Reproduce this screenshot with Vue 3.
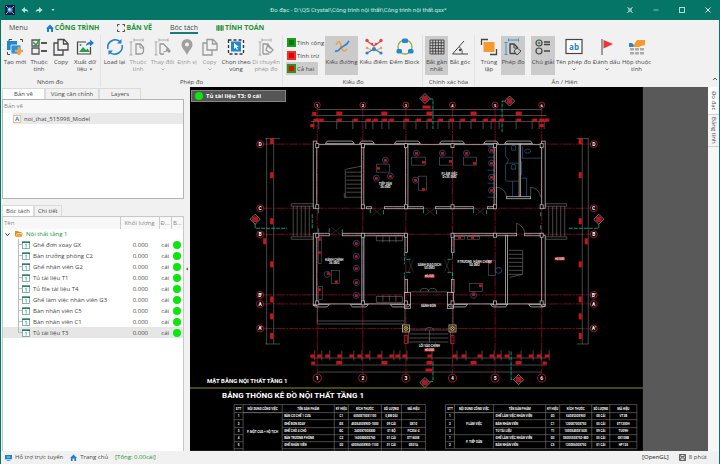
<script setup>
import { ref } from 'vue'

const icons = {
  create: '<path d="M3 4V1.500h3M14 1.500h2.500V4M1.500 14v2.500H4" fill="none" stroke="#444"/><rect x="1" y="3" width="10" height="9" fill="#1e88d2"/><path d="M5 7h10v9H5z" fill="#2d93da" stroke="#f1f1f1" stroke-width=".8"/><path d="M13 9v8M9 13h8" stroke="#f1a14a" stroke-width="2.600"/>',
  props: '<path d="M2 2h7v6H2zM2 10h7v6H2z" fill="none" stroke="#555" stroke-width="1.300"/><path d="M3 4l3 3 4-6" fill="none" stroke="#2b9c4a" stroke-width="1.500"/><path d="M11 5h6M11 13h6" stroke="#555" stroke-width="1.800"/>',
  copy: '<path d="M6 1.500h6l4 4V12H6zM11.500 1.500V6H16" fill="none" stroke="currentColor" stroke-width="1.300"/><path d="M6 5H2v12h9v-5" fill="none" stroke="currentColor" stroke-width="1.300"/>',
  export: '<path d="M10 4H1.500v12h13V9" fill="none" stroke="#444" stroke-width="1.200"/><path d="M3 14l4-5 3 3 1.500-1.500L14 14z" fill="#2b9c4a"/><circle cx="4.500" cy="7" r="1" fill="#2b9c4a"/><path d="M10 8c0-3 2-4 4-4V1.500L18 5l-4 3.500V6.500c-2 0-3 .5-4 1.500z" fill="#1e7fd0"/>',
  reload: '<path d="M2 11A7.500 7.500 0 0 1 14 3.500M16 7A7.500 7.500 0 0 1 4 14.500" fill="none" stroke="#1e7fd6" stroke-width="1.500"/><path d="M15.500 1v4.500H11zM2.500 17v-4.500H7z" fill="#1e7fd6"/>',
  measure: '<path d="M2 4v13M.5 4h3M.5 17h3M5 2h9M5 .5v3M14 .5v3" fill="none" stroke="#aaa"/><path d="M7 16V6h4.500l3 3.500V13c0 2-2 3-4 3z" fill="none" stroke="#999" stroke-width="1.300"/><path d="M11 6v4h3" fill="none" stroke="#999"/>',
  change: '<path d="M2 4v13M.5 4h3M.5 17h3M5 2h9M5 .5v3M14 .5v3" fill="none" stroke="#aaa"/><path d="M6 16V6h3.500l5 5-2 2-3 1M6 16h4" fill="none" stroke="#999" stroke-width="1.300"/><path d="M13 9l4 4-2 2-3-3z" fill="#999"/>',
  pin: '<path d="M9 1a5.500 5.500 0 0 0-5.500 5.500C3.500 10 7 12.500 9 17c2-4.500 5.500-7 5.500-10.500A5.500 5.500 0 0 0 9 1z" fill="#a0a0a0"/><circle cx="9" cy="6.500" r="2" fill="#f1f1f1"/>',
  region: '<rect x="1.500" y="2" width="15" height="14" fill="none" stroke="#333" stroke-width="1.300" stroke-dasharray="3 2"/><rect x="4" y="3.500" width="10" height="10" fill="#1e88d2"/><path d="M7 5v6l1.500-1.500L10 12l1-1-1.500-2H12z" fill="#fff"/>',
  move: '<path d="M3 4v13M1.500 4h3M1.500 17h3M5 2h9M5 .5v3M14 .5v3" fill="none" stroke="#aaa"/><path d="M6 16V6h3.500l4 4.500M6 16h6" fill="none" stroke="#999" stroke-width="1.300"/><path d="M11 6l2 3 3 3-3 3-4-3z" fill="none" stroke="#999" stroke-width="1.300"/>',
  line: '<path d="M3 7c3-6 4-3 5 1s3 7 6 3" fill="none" stroke="#f1a14a" stroke-width="1.600"/><path d="M2 13c4 1 4-2 7-4s4-1 7-6" fill="none" stroke="#2c86c8" stroke-width="1.600"/>',
  points: '<path d="M2 3l7 5 7-5" fill="none" stroke="#e04848" stroke-width="1.200"/><path d="M2 10l7 3 7-3" fill="none" stroke="#f1a14a"/><path d="M2 15l7-4 7 4" fill="none" stroke="#2c86c8" stroke-width="1.200"/><g fill="#e04848"><circle cx="2" cy="2.500" r="1.700"/><circle cx="16" cy="2.500" r="1.700"/><circle cx="7" cy="6" r="1.300"/><circle cx="11" cy="6" r="1.300"/></g><circle cx="2" cy="10" r="1.300" fill="#f1a14a"/><circle cx="16" cy="10" r="1.300" fill="#f1a14a"/><g fill="#2c86c8"><circle cx="2" cy="15" r="1.600"/><circle cx="16" cy="15" r="1.600"/><circle cx="9" cy="11" r="2"/></g>',
  block: '<circle cx="9" cy="9" r="7" fill="none" stroke="#a3ad3b" stroke-width="1.400"/><g fill="#1e88d2"><rect x="6" y="0.500" width="6" height="4.500" rx="1.500"/><rect x="0.500" y="11" width="5.500" height="4.500" rx="1.500"/><rect x="12" y="11" width="5.500" height="4.500" rx="1.500"/></g>',
  grid: '<path d="M2 2h14v14H2zM4.800 2v14M7.600 2v14M10.400 2v14M13.200 2v14M2 4.800h14M2 7.600h14M2 10.400h14M2 13.200h14" fill="none" stroke="#333" stroke-width=".8"/>',
  angle: '<path d="M13 3L1.500 16H17" fill="none" stroke="#444"/><path d="M8 8.500c3 2 3.500 5 3 7.500" fill="none" stroke="#444" stroke-width=".9"/><circle cx="9" cy="12" r="1.200" fill="#444"/>',
  overlap: '<path d="M1.500 7V1.500H8M16.500 11v5.500H10" fill="none" stroke="#444" stroke-width="1.300"/><rect x="3.500" y="4" width="11" height="10" fill="#f79a2e"/>',
  gauge: '<path d="M2 4v13M.5 4.500h3M.5 16.500h3M4 2h11M4.500 .5v3M14.500 .5v3" fill="none" stroke="#3c92cc"/><path d="M6 15.500V6h4l4 4M6 15.500h6" fill="none" stroke="#444" stroke-width="1.400"/><path d="M10 6v4h3M10 13l3-3 4 3-4 4z" fill="none" stroke="#444"/>',
  legend: '<circle cx="5" cy="5" r="3" fill="none" stroke="#444" stroke-width="1.200"/><circle cx="5" cy="5" r="1.300" fill="#3b9c57"/><circle cx="5" cy="13" r="3" fill="none" stroke="#444" stroke-width="1.200"/><path d="M10 4h6M10 6.500h6M10 13h6" stroke="#444" stroke-width="1.300"/>',
  ab: '<rect x="1" y="1.500" width="16" height="14" fill="#fff" stroke="#444" stroke-width="1.200"/><text x="9" y="11.500" text-anchor="middle" font-size="8" font-weight="700" fill="#1e7fd0">ab</text>',
  flag: '<path d="M4 1v16" stroke="#555" stroke-width="1.100"/><path d="M5.500 2L15 6l-9.500 4.500z" fill="#ee3135"/>',
  panel: '<path d="M1 5h3l3 3-1 1H1z" fill="#2c86c8"/><path d="M9 2h8v5l-4 1-2 1H5l2-4z" fill="#f79a2e"/><g fill="#aaa"><rect x="2" y="10" width="4" height="2.500"/><rect x="7" y="10" width="4" height="2.500"/><rect x="12" y="10" width="4" height="2.500"/><rect x="2" y="14" width="4" height="2.500"/><rect x="7" y="14" width="4" height="2.500"/><rect x="12" y="14" width="4" height="2.500"/></g>',
}

const groups = [
  { key: 'manage', label: 'Nhóm đo', items: [
    { icon: 'create', lines: ['Tạo mới'] },
    { icon: 'props', lines: ['Thuộc', 'tính'] },
    { icon: 'copy', lines: ['Copy'] },
    { icon: 'export', lines: ['Xuất dữ', 'liệu'], inlineDrop: true },
  ] },
  { key: 'measure', label: 'Phép đo', items: [
    { icon: 'reload', lines: ['Load lại'] },
    { icon: 'measure', lines: ['Thuộc', 'tính'], dim: true },
    { icon: 'change', lines: ['Thay đổi'], dim: true, drop: true },
    { icon: 'pin', lines: ['Định vị'], dim: true },
    { icon: 'copy', lines: ['Copy'], dim: true, drop: true },
    { icon: 'region', lines: ['Chọn theo', 'vùng'] },
    { icon: 'move', lines: ['Di chuyển', 'phép đo'], dim: true },
  ] },
  { key: 'kind', label: 'Kiểu đo', signs: true, items: [
    { icon: 'line', lines: ['Kiểu đường'], on: true },
    { icon: 'points', lines: ['Kiểu điểm'] },
    { icon: 'block', lines: ['Đếm Block'] },
  ] },
  { key: 'snap', label: 'Chính xác hóa', items: [
    { icon: 'grid', lines: ['Bắt gần', 'nhất'], on: true },
    { icon: 'angle', lines: ['Bắt góc'] },
  ] },
  { key: 'show', label: 'Ẩn / Hiện', items: [
    { icon: 'overlap', lines: ['Trùng', 'lặp'] },
    { icon: 'gauge', lines: ['Phép đo'], on: true },
    { icon: 'legend', lines: ['Chú giải'], on: true },
    { icon: 'ab', lines: ['Tên phép đo'], drop: true },
    { icon: 'flag', lines: ['Đánh dấu'], drop: true },
    { icon: 'panel', lines: ['Hộp thuộc', 'tính'] },
  ] },
]
const signs = [
  { cls: 'plus', label: 'Tính cộng' },
  { cls: 'minus', label: 'Tính trừ' },
  { cls: 'both', label: 'Cả hai' },
]
const activeSign = ref('both')

const items = ['Ghế đơn xoay GX', 'Bàn trưởng phòng C2', 'Ghế nhân viên G2', 'Tủ tài liệu T1', 'Tủ file tài liệu T4', 'Ghế làm việc nhân viên G3', 'Bàn nhân viên C5', 'Bàn nhân viên C1', 'Tủ tài liệu T3']
const selected = ref('Tủ tài liệu T3')

/* Plan geometry, in drawing units */
const cols = [317, 362.5, 405.5, 452, 494.5, 541]
const rows = [['D', 144], ['C', 208], ['B', 234], ["B'", 294.5], ['A', 303.5], ["A'", 328]]
const walls = [
  [313, 141, 3.5, 67], [541, 141, 3.5, 67], [361, 144, 2.5, 63], [405, 144, 2.5, 63], [493.5, 144, 2.5, 63], [518.5, 144, 1.5, 52],
  [366, 206.5, 5, 2], [384, 206.5, 39, 2], [435, 206.5, 38, 2], [487, 206.5, 8, 2], [506, 196.5, 24, 2],
  [317, 233, 12, 2.5], [342, 233, 64, 2.5], [452, 233, 64, 2.5], [524, 233, 18, 2.5],
  [313, 233, 3.5, 72], [361.5, 235, 2, 69], [404.5, 235, 2.5, 17], [404.5, 279, 2.5, 13], [451, 235, 2.5, 17], [451, 279, 2.5, 13],
  [505, 235, 2, 69], [541, 235, 3.5, 71], [404, 292, 6, 16], [447, 292, 6, 16],
]
const bays = [[325, 29], [359, 15], [394, 26], [439, 25], [483, 15], [504, 28]]
const lowBays = [[313, 16], [350, 18], [390, 20], [447, 20], [490, 17], [528, 17]]
const pillars = []
for (const x of cols) for (const y of [145, 206, 234.5, 302]) pillars.push([x - 1.5, y - 1.5])
const doors = [[370, 209], [423, 209], [473, 209], [329, 228]]
const topMarks = [316, 321, 339, 355, 368, 375, 384, 391, 406, 418, 429, 440, 451, 462, 473, 485, 493, 501, 518, 534, 541, 546]
const lowMarks = [312, 319, 327, 339, 351, 359, 367, 379, 391, 397, 404, 429, 454, 463, 479, 491, 498, 506, 518, 530, 538, 546]
const spans = [339, 384, 429, 473, 518]
const sideMarks = [141, 175, 221, 264, 299, 316, 335.5]
const desks = [
  [376, 164, 13, 8], [411, 157, 14, 8], [439, 157, 13, 8], [463, 157, 13, 8], [418, 176, 8, 14],
  [331, 270, 8, 13], [488, 260, 7, 15], [469, 283, 13, 8], [454, 236, 10, 3], [467, 236, 12, 3],
  [318, 237, 3, 26], [318, 286, 4, 13],
]
const chairs = [
  [385, 160], [376, 178], [390, 176], [416, 153], [442, 153], [466, 153], [415, 180], [327, 274], [498, 270], [473, 295],
  [356, 243], [356, 256], [356, 268], [356, 282], [356, 295], [491, 150], [491, 163], [491, 177], [491, 190],
]
const tags = [
  [385, 160], [378, 168], [376, 178], [390, 176], [416, 153], [423, 162], [442, 153], [450, 161], [466, 153], [474, 163], [415, 180], [423, 189],
  [328, 273], [336, 281], [489, 262], [480, 285], [473, 294], [356, 243], [356, 256], [356, 268], [356, 282], [356, 295],
  [491, 150], [491, 163], [491, 177], [491, 190], [319, 239], [319, 252], [319, 289], [459, 237], [472, 237],
]
const rooms = [
  [385, 185, 'TIẾP DÂN'], [385, 188, '36.0M2'], [449, 175, 'P.LÀM VIỆC'], [449, 178, 'D=35.0M2'], [334, 261, 'HÀNH CHÍNH'], [334, 264, '36.0M2'],
  [429, 266, 'SẢNH GIAO DỊCH'], [429, 269, '50.0M2'], [428, 307, 'SẢNH ĐÓN'], [474, 263, 'P.TRƯỞNG, HÀNH CHÍNH'], [474, 266, '54.0M2'], [429, 346.5, 'LỐI VÀO CHÍNH'],
]
const levels = [[429, 277], [429, 350.5], [559, 259.5]]
const sections = [[255, 219], [424.5, 98.5], [509, 101], [598, 219], [424.5, 382], [518, 379]]

const heads = ['STT', 'NỘI DUNG CÔNG VIỆC', 'TÊN SẢN PHẨM', 'KÝ HIỆU', 'KÍCH THƯỚC', 'SỐ LƯỢNG', 'MÃ HIỆU']
const ys = [404, 412, 419, 427, 434, 441, 448]
const schedules = [
  { xs: [234, 243, 282, 334, 348, 381, 401, 425], bodyEnd: 450, merges: [[412, 450, 'P. MỘT CỬA + HỘ TỊCH']], rows: [
    ['1', 'BÀN CƠ CHẾ 1 CỬA', 'C1', '6000X700X1100', '5,8M DÀI', ''],
    ['2', 'GHẾ ĐƠN XOAY', 'GX', '450X450X900-1000', '09 CÁI', 'GX10'],
    ['3', 'GHẾ CHỜ 4 CHỖ', 'GC', '2400X700X800', '01 BỘ', 'PC204-4'],
    ['4', 'BÀN TRƯỞNG PHÒNG', 'C2', '1600X800X760', '01 CÁI', 'ET1600E'],
    ['5', 'GHẾ NHÂN VIÊN', 'G2', '600X600X900-1100', '01 CÁI', 'GX01A'],
  ] },
  { xs: [445, 454, 493, 545, 559, 591, 609, 636], bodyEnd: 448, merges: [[412, 434, 'P.LÀM VIỆC'], [434, 448, 'P. TIẾP DÂN']], rows: [
    ['1', 'GHẾ LÀM VIỆC NHÂN VIÊN', 'G3', '540X530X900', '08 CÁI', 'VT3B'],
    ['2', 'BÀN NHÂN VIÊN', 'C1', '1200X700X750', '05 CÁI', 'ET1200H'],
    ['3', 'TỦ TÀI LIỆU', 'T1', '1000X450X1830', '09 CÁI', 'TU09H'],
    ['1', 'GHẾ LÀM VIỆC NHÂN VIÊN', 'G3', '550X550X750-880', '05 CÁI', 'GX108B'],
    ['2', 'BÀN NHÂN VIÊN', 'C5', '1200X600X750', '01 CÁI', 'HP12S'],
  ] },
]
const mid = (a, i) => (a[i] + a[i + 1]) / 2
</script>

<template>
  <div class="app">
    <header class="titlebar">
      <div class="quick">
        <svg class="logo" viewBox="0 0 10 10"><rect width="10" height="10" fill="#10163c" /><path d="M1 1l2 2M9 1L7 3M1 9l2-2M9 9L7 7" stroke="#bcd" stroke-width=".8" /><circle cx="5" cy="5" r="2.700" fill="#3f8fe0" /><circle cx="4.500" cy="4.500" r="1.200" fill="#d8f0ff" /></svg>
        <button aria-label="Undo"><svg viewBox="0 0 8 8"><path d="M4 1v2c2 0 3 1 3.500 3.500C6.500 5 5.500 5 4 5v2L.5 4z" fill="#b9e2dc" /></svg></button>
        <button aria-label="Redo"><svg viewBox="0 0 8 8"><path d="M4 1v2c-2 0-3 1-3.500 3.500C1.500 5 2.500 5 4 5v2l3.500-3z" fill="#b9e2dc" /></svg></button>
        <button aria-label="Customize"><svg viewBox="0 0 8 8"><path d="M2.500 3h3L4 5z" fill="#cfeae6" /></svg></button>
      </div>
      <h1>Đo đạc - D:\QS Crystal\Công trình nội thất\Công trình nội thất.qsx*</h1>
      <div class="winbtns">
        <button aria-label="Fit"><svg viewBox="0 0 8 8"><path d="M1.500 1l1.500 2h2l1.500-2M1.500 7L3 5h2l1.500 2M3 3v2M5 3v2" fill="none" stroke="#cfeae6" stroke-width=".9" /></svg></button>
        <button aria-label="Minimize"><svg viewBox="0 0 8 8"><path d="M1.500 4h5" stroke="#8cc8bf" /></svg></button>
        <button aria-label="Maximize"><svg viewBox="0 0 8 8"><rect x="1.500" y="1.500" width="5" height="5" fill="none" stroke="#b5ddd7" /></svg></button>
        <button aria-label="Close"><svg viewBox="0 0 8 8"><path d="M1.500 1.500l5 5M6.500 1.500l-5 5" stroke="#e3f4f1" /></svg></button>
      </div>
    </header>

    <section class="ribbon">
      <nav class="menu">
        <button class="plain">Menu</button>
        <button><svg viewBox="0 0 8 8"><path d="M4 .5L0 4.500h1V8h2V5h2v3h2V4.500h1z" fill="#1e7fd0" /></svg>CÔNG TRÌNH</button>
        <button><svg viewBox="0 0 8 8"><path d="M.5 2.500v-2h2M5.500.5h2v2M7.500 5.500v2h-2M2.500 7.500h-2v-2" fill="none" stroke="#444" /></svg>BẢN VẼ</button>
        <button class="plain current">Bóc tách</button>
        <button><svg viewBox="0 0 8 8"><path d="M0 1h8v6H0z" fill="#9dc59f" /><path d="M0 3h8M0 5h8M2.500 1v6M5.500 1v6" stroke="#2e8b3e" stroke-width=".7" /></svg>TÍNH TOÁN</button>
      </nav>
      <div class="groups">
        <div v-for="g in groups" :key="g.key" class="group" :class="g.key">
          <div class="tools">
            <div v-if="g.signs" class="signs">
              <button v-for="s in signs" :key="s.cls" :class="{ on: activeSign === s.cls }" @click="activeSign = s.cls">
                <i :class="s.cls"></i>{{ s.label }}
              </button>
            </div>
            <button v-for="(t, i) in g.items" :key="i" class="tool" :class="{ on: t.on, dim: t.dim }">
              <svg viewBox="0 0 18 18" v-html="icons[t.icon]"></svg>
              <span v-for="l in t.lines" :key="l">{{ l }}<svg v-if="t.inlineDrop && l === t.lines[1]" class="caret" viewBox="0 0 4 3"><path d="M.5.5h3L2 2.500z" fill="#666" /></svg></span>
              <svg v-if="t.drop" class="caret below" viewBox="0 0 4 3"><path d="M.5.5L2 2 3.500.5" fill="none" stroke="currentColor" stroke-width=".7" /></svg>
            </button>
          </div>
          <p>{{ g.label }}</p>
        </div>
        <button class="collapse" aria-label="Collapse"><svg viewBox="0 0 6 6"><path d="M1 4l2-2 2 2" fill="none" stroke="#555" /></svg></button>
      </div>
    </section>

    <main class="main">
      <aside class="side">
        <div class="tabs top"><button class="active">Bản vẽ</button><button>Vùng căn chỉnh</button><button>Layers</button></div>
        <div class="drawings">
          <div class="dhead">Bản vẽ</div>
          <div class="drow"><b>A</b>noi_that_515998_Model</div>
        </div>
        <div class="tabs low"><button class="active">Bóc tách</button><button>Chi tiết</button></div>
        <div class="treebox">
          <table>
            <thead><tr><th class="c-name">Tên</th><th class="c-qty">Khối lượng</th><th class="c-unit">Đ...</th><th class="c-dot">B...</th></tr></thead>
            <tbody>
              <tr class="parent">
                <td colspan="4"><div><svg class="chev" viewBox="0 0 6 6"><path d="M.5 1.500L3 4.500l2.500-3" fill="none" stroke="#444" stroke-width="1.200" /></svg><svg class="folder" viewBox="0 0 8 6"><path d="M0 0h3l1 1h2.500v1H2L.5 5.500H0z" fill="#e8871e" /><path d="M2 2.500h6L6.500 6H.7z" fill="#f7a23a" /></svg>Nội thất tầng 1</div></td>
              </tr>
              <tr v-for="n in items" :key="n" class="leaf" :class="{ sel: n === selected }" @click="selected = n">
                <td><div><i class="branch"></i><svg class="one" viewBox="0 0 8 8"><rect x=".5" y="1" width="7" height="6.500" fill="#fff" stroke="#6f9a90" stroke-width=".8" /><path d="M0 1.200h8" stroke="#187a4a" stroke-width="1.400" /><path d="M3.400 3.600L4.200 3v3.600" fill="none" stroke="#2c9bd0" stroke-width=".8" /></svg>{{ n }}</div></td>
                <td class="num">0.000</td><td class="unit">cái</td><td class="dot"><i></i></td>
              </tr>
            </tbody>
          </table>
        </div>
      </aside>
      <div class="splitter"><svg viewBox="0 0 4 4"><path d="M3 .5v3L1 2z" fill="#555" /></svg></div>

      <div class="canvas">
        <svg class="plan" viewBox="190 87 517 363" role="img" aria-label="Mặt bằng nội thất tầng 1">
          <rect x="190" y="87" width="452" height="363" fill="#000" />
          <g class="axis">
            <path v-for="x in cols" :key="x" :d="`M${x} 108V373`" />
            <path v-for="r in rows" :key="r[0]" :d="`M263 ${r[1]}H590`" />
          </g>
          <g class="thin">
            <path d="M266.500 138V343.500M273.500 138V343.500M265 138.500H280M265 343.500H280M581.500 138V343.500M587.500 138V343.500M576 138.500H588M576 343.500H588" />
            <path d="M317 109.500H541M311 115.500H546M311 121.500H546M311 357.500H546M311 364.500H546M317 371.500H541M317 320.500H404M317 323.500H404M317 306V323" />
            <path v-for="x in topMarks" :key="'t' + x" :d="`M${x - 2.5} 119V129`" />
            <path v-for="x in lowMarks" :key="'l' + x" :d="`M${x + 2.5} 350V360`" />
            <path d="M409 329.500H448M409 333.500H448M409 337.500H448M409 341.500H448M408 331V343M450 331V343M429 330V342M425 330a4 3 0 0 1 8 0M410 291.500H448M420 291a4 3 0 0 1 8 0a4 3 0 0 1 8 0M404.500 308V324M452.500 308V324" />
            <path d="M291 203.500H313V206H291zM291 236.500H313V239H291zM293 206V236M297 206V236M301 206V236M305 206V236M309 206V236M545 203.500H566V206H545zM545 236.500H566V239H545zM548 206V236M552 206V236M556 206V236M560 206V236M564 206V236" />
            <path d="M346 169L361 166M345 169V198M344 193V197H361M346 172H361M346 176H361M346 180H361M346 184H361M346 188H361M346 192H361M508 250H522V274L509 277M508 254H522M508 258H522M508 262H522M508 266H522M508 270H522M508 274H522" />
            <path d="M376 240.500h26v-5h-26zM382.500 236v6M389 236v6M395.500 236v6M376 296h26v6h-26zM382.500 295v6M389 295v6M395.500 295v6M516 233V223c5 2 8 6 8 10M530 196V187c6 1 9 4 10 10M496 197V187c6 1 9 4 10 10" />
          </g>
          <g class="furn">
            <rect v-for="(d, i) in desks" :key="i" :x="d[0]" :y="d[1]" :width="d[2]" :height="d[3]" />
          </g>
          <g class="blue">
            <circle v-for="(c, i) in chairs" :key="i" :cx="c[0]" :cy="c[1]" r="3" />
            <path d="M505 146V156L508 160L505 165V180M505 163H518M505 181H518M521 158H532L540 158M522 146V158M521 161V175M511 147a2 2 0 0 1 4 0v3h-4zM511 166a2 2 0 0 1 4 0v3h-4zM524 151a3 2 0 1 0 6 0a3 2 0 1 0-6 0M521 178H526V196M512 181V196M487 146H494M487 157H494M487 170H494M487 183H494M487 197H494M363.500 236V303" />
          </g>
          <g class="walls">
            <rect v-for="(w, i) in walls" :key="i" :x="w[0]" :y="w[1]" :width="w[2]" :height="w[3]" />
            <path d="M316.500 144.500H541M316.500 303.500H404M453 303.500H541" />
            <path v-for="b in bays" :key="'b' + b[0]" :d="`M${b[0]} 143.500l2-2.500h${b[1] - 4}l2 2.500z`" />
            <path v-for="b in lowBays" :key="'w' + b[0]" :d="`M${b[0]} 304l2 2.500h${b[1] - 4}l2-2.500z`" />
            <rect v-for="(p, i) in pillars" :key="'p' + i" class="pillar" :x="p[0]" :y="p[1]" width="3" height="4" />
          </g>
          <g class="green">
            <path v-for="(d, i) in doors" :key="i" :d="`M${d[0]} ${d[1]}v5m13 0v-5`" />
            <path d="M404 252v12M410 259h-4M410 272h-4M404 279v-7M447 259h4M447 272h4M452 252v6M452 272v6M255 224v4h32M598 224v4h-30M429 99h3.500v30M504 101h-2.500v31M432.500 361v20h-3M510.500 351v28h3M312 214v14M318 209v5M318 228v4M540 212v4M540 225v5" />
          </g>
          <g class="x-doors"><path v-for="(d, i) in doors" :key="i" :d="`M${d[0] + 2} ${d[1] - 1}l9 7m0-7l-9 7`" /><path d="M408 259l5 13m0-13l-5 13M444 259l5 13m0-13l-5 13" /></g>
          <g class="marks">
            <rect v-for="x in topMarks" :key="'a' + x" :x="x - 2" y="118.500" width="4.500" height="3" />
            <rect v-for="x in lowMarks" :key="'c' + x" :x="x - 2" y="354" width="4.500" height="3" />
            <g v-for="x in spans" :key="'s' + x"><rect :x="x - 3" y="111.500" width="6" height="3.500" /><rect :x="x - 3" y="360.500" width="6" height="3.500" /></g>
            <rect x="422" y="105.500" width="8" height="3" /><rect x="425" y="368" width="7" height="3" />
            <rect x="312" y="112" width="4" height="3" /><rect x="310" y="124" width="4" height="3" /><rect x="539" y="124" width="4" height="3" /><rect x="311" y="361" width="4" height="3" /><rect x="542" y="361" width="4" height="3" />
            <g v-for="y in sideMarks" :key="'y' + y"><rect x="270" :y="y - 3" width="3" height="6" /><rect x="578" :y="y - 3" width="3" height="6" /></g>
            <rect x="263" y="238" width="3" height="6" /><rect x="584" y="238" width="3" height="6" />
            <rect v-for="(t, i) in tags" :key="'g' + i" :x="t[0] - 1.5" :y="t[1] - 1" width="3" height="2.500" />
            <path d="M404 335h3v8h-3zM450.500 335h3v8h-3z" stroke="#a01822" />
          </g>
          <g class="posts">
            <g v-for="x in [405.5, 452]" :key="x"><rect :x="x - 3.5" y="324.500" width="7" height="7" /><path :d="`M${x - 2} 326l4 4m0-4l-4 4`" /><circle :cx="x" cy="328" r="2" /></g>
          </g>
          <g class="bubbles">
            <g v-for="(x, i) in cols" :key="x"><circle :cx="x" cy="105" r="3" /><text :x="x" y="106.500">{{ i + 1 }}</text><circle :cx="x" cy="377.500" r="4" /><text class="big" :x="x" y="379.500">{{ i + 1 }}</text></g>
            <g v-for="r in rows" :key="r[0]"><circle cx="260" :cy="r[1]" r="3.500" /><text class="big" x="260" :y="r[1] + 2">{{ r[0] }}</text><circle cx="593" :cy="r[1]" r="3.500" /><text class="big" x="593" :y="r[1] + 2">{{ r[0] }}</text></g>
          </g>
          <g class="sections"><g v-for="(s, i) in sections" :key="i"><path :d="`M${s[0]} ${s[1] - 5}l5 5l-5 5l-5-5z`" /><circle :cx="s[0]" :cy="s[1]" r="3" /></g></g>
          <g class="rooms"><text v-for="(r, i) in rooms" :key="i" :x="r[0]" :y="r[1]">{{ r[2] }}</text></g>
          <g class="levels"><g v-for="(l, i) in levels" :key="i"><rect :x="l[0] - 5" :y="l[1] - 2.5" width="10" height="3" /><text :x="l[0]" :y="l[1]">±0.000</text></g></g>
          <path d="M190 387.500H642" stroke="#8f8f12" />
          <text class="cap" x="207" y="382">MẶT BẰNG NỘI THẤT TẦNG 1</text>
          <text class="cap large" x="222" y="397">BẢNG THỐNG KÊ ĐỒ NỘI THẤT TẦNG 1</text>
          <g v-for="(s, k) in schedules" :key="k" class="schedule">
            <path v-for="x in s.xs" :key="x" :d="`M${x} 404V${s.bodyEnd}`" />
            <path :d="`M${s.xs[0]} 404H${s.xs[7]}M${s.xs[0]} 412H${s.xs[7]}`" />
            <path v-for="y in ys.slice(2)" :key="y" :d="`M${s.xs[0]} ${y}H${s.xs[1]}M${s.xs[2]} ${y}H${s.xs[7]}`" />
            <text v-for="(h, i) in heads" :key="h" :x="mid(s.xs, i)" y="409">{{ h }}</text>
            <template v-for="(m, i) in s.merges" :key="i">
              <path :d="`M${s.xs[1]} ${m[0]}H${s.xs[2]}`" /><text :x="mid(s.xs, 1)" :y="(m[0] + m[1]) / 2 + 1">{{ m[2] }}</text>
            </template>
            <path v-if="s.bodyEnd === 448" :d="`M${s.xs[1]} 448H${s.xs[2]}`" />
            <template v-for="(r, i) in s.rows" :key="i">
              <text :x="mid(s.xs, 0)" :y="mid(ys, i + 1) + 1">{{ r[0] }}</text>
              <text class="left" :x="s.xs[2] + 2" :y="mid(ys, i + 1) + 1">{{ r[1] }}</text>
              <text v-for="j in 4" :key="j" :x="mid(s.xs, j + 2)" :y="mid(ys, i + 1) + 1">{{ r[j + 1] }}</text>
            </template>
          </g>
        </svg>
        <div class="badge"><i></i>Tủ tài liệu T3: 0 cái</div>
      </div>

      <nav class="dock"><button class="active">Đo đạc</button><button>Bảng tính</button></nav>
    </main>

    <footer class="status">
      <a href="#"><svg viewBox="0 0 8 8"><path d="M0 1h8v5H0zM2 7h4v1H2z" fill="#1e7fd0" /><path d="M2 3h4v1H2z" fill="#bfe0f5" /></svg>Hỗ trợ trực tuyến</a>
      <a href="#"><svg viewBox="0 0 8 8"><path d="M4 .5L0 4.500h1V8h2V5h2v3h2V4.500h1z" fill="#1e7fd0" /></svg>Trang chủ</a>
      <span class="total">[Tổng: 0.00cái]</span>
      <span class="gl">[OpenGL]</span>
      <span class="saved"><svg viewBox="0 0 8 8"><path d="M.5.5h7v7h-7zM2 .5v2.500h4V.5M2 7.500v-3h4v3" fill="none" stroke="#444" /></svg>8 phút</span>
    </footer>
  </div>
</template>

<style>
body { background: #f1f1f1; }
</style>

<style scoped>
* { box-sizing: border-box; margin: 0; padding: 0; }
.app { display: flex; flex-direction: column; min-height: 100vh; font: 6px/8px "Open Sans", "Noto Sans", sans-serif; color: #484848; background: #f1f1f1; }
button { border: 0; background: none; font: inherit; color: inherit; white-space: nowrap; }
svg { display: block; flex: none; }
.titlebar { display: grid; grid-template-columns: 1fr auto 1fr; align-items: center; height: 20px; background: #057568; color: #cdeae6; padding: 0 8px 0 5px; }
.titlebar h1 { font: 400 6px/8px Roboto, sans-serif; }
.quick, .winbtns { display: flex; align-items: center; }
.quick { gap: 6px; }
.quick svg { width: 8px; height: 8px; }
.quick .logo { width: 10px; height: 10px; }
.winbtns { justify-content: flex-end; gap: 18px; }
.winbtns svg { width: 8px; height: 8px; }
.ribbon { border: solid #057568; border-width: 0 1px; height: 67px; }
.menu { display: flex; height: 15px; padding-left: 8px; font-size: 7px; }
.menu button { display: flex; align-items: center; gap: 1px; margin-right: 18px; font-weight: 700; color: #259238; }
.menu svg { width: 8px; height: 8px; }
.menu .plain { font-weight: 400; color: #484848; }
.menu .current { border-bottom: 2px solid #16806f; height: 14px; padding-top: 3px; }
.groups { display: flex; height: 52px; }
.group { border-right: 1px solid #e2e2e2; display: flex; flex-direction: column; justify-content: space-between; padding: 1px 2px; }
.group p { text-align: center; }
.group.show { border-right: 0; }
.tools { display: grid; height: 39px; }
.group.manage { padding-left: 1px; }
.manage .tools { grid-template-columns: 26px 22px 22px 26px; }
.measure .tools { grid-template-columns: 23px 24px 25px 24px 21px 32px 28px; }
.kind .tools { grid-template-columns: 39px 33px 31px 31px; }
.group.kind { padding-left: 3px; }
.snap .tools { grid-template-columns: 23px 24px; }
.show .tools { grid-template-columns: 24px 24px 30px 37px 29px 31px; }
.show .tool:nth-child(3) { margin-left: 6px; }
.tool { display: flex; flex-direction: column; align-items: center; line-height: 7px; padding-top: 2px; }
.tool > svg { width: 18px; height: 18px; margin-bottom: 3px; }
.tool span { display: flex; align-items: center; gap: 2px; }
.tool .caret { width: 4px; height: 3px; }
.tool .below { margin-top: 2px; }
.tool.on { background: #cbcbcb; }
.tool.dim { color: #999; }
.signs { display: flex; flex-direction: column; justify-content: space-between; margin-right: 2px; }
.signs button { display: flex; align-items: center; gap: 1px; height: 13px; padding-left: 1px; margin-right: 5px; }
.signs .on { background: #cbcbcb; }
.signs i { flex: none; width: 9px; height: 9px; border: 2px solid #1c9b1c; background: #0a7a0a; }
.signs .minus { background: #e80000; border-color: #e83030; }
.signs .both { background: #f00; border-color: #1c9b1c; }
.collapse { margin: auto 1px 5px auto; }
.collapse svg { width: 6px; height: 6px; }
.main { display: flex; flex: 1; border: solid #057568; border-width: 0 1px; }
.side { width: 183px; padding: 1px 0 0 1px; display: flex; flex-direction: column; }
.tabs { display: flex; }
.tabs button { border: 1px solid #dadada; border-bottom: 0; height: 11px; }
.tabs .active { background: #fff; }
.top button { flex: 0 0 43px; }
.top button:nth-child(2) { flex-basis: 54px; }
.top button:nth-child(3) { flex-basis: 42px; }
.drawings { background: #fff; border: 1px solid #b4b4b4; height: 100px; }
.dhead { height: 13px; line-height: 13px; padding-left: 1px; background: #f8f8f8; color: #8a8a8a; }
.drow { display: flex; align-items: center; gap: 3px; height: 11px; margin-left: 10px; background: #e9e9e9; }
.drow b { width: 8px; height: 8px; border: 1px solid #f0c080; background: #fff; color: #2186cf; text-align: center; line-height: 6px; }
.low { margin-top: 6px; }
.low button { padding: 0 3px; }
.treebox { flex: 1; background: #fff; border: solid #c8c8c8; border-width: 1px 1px 0; }
table { width: 100%; table-layout: fixed; border-collapse: collapse; }
th { height: 12px; font-weight: 400; color: #888; background: #f8f8f8; border-right: 1px solid #ccc; text-align: center; }
.c-name { text-align: left; padding-left: 1px; }
.c-qty { width: 39px; }
.c-unit { width: 12px; }
.c-dot { width: 12px; border-right: 0; }
td div { display: flex; align-items: center; height: 11px; white-space: nowrap; }
.parent { color: #259238; }
.parent div { height: 10px; padding-left: 2px; gap: 5px; }
.chev { width: 5px; height: 5px; }
.folder { width: 8px; height: 6px; margin-right: -2px; }
.leaf div { padding-left: 15px; gap: 3px; }
.branch { width: 4px; height: 11px; margin-right: -3px; background: linear-gradient(#bbb, #bbb) 0 0 / 1px 100% no-repeat, linear-gradient(#bbb, #bbb) 0 5px / 100% 1px no-repeat; }
.leaf:last-child .branch { background: linear-gradient(#bbb, #bbb) 0 0 / 1px 6px no-repeat, linear-gradient(#bbb, #bbb) 0 5px / 100% 1px no-repeat; }
.one { width: 8px; height: 8px; }
.num { text-align: right; padding-right: 11px; }
.unit { text-align: right; padding-right: 2px; }
.dot i { display: block; width: 8px; height: 8px; margin: auto; border-radius: 50%; background: #0be60b; }
.sel { background: #e6e6e6; }
.splitter { width: 6px; display: flex; align-items: center; justify-content: center; }
.splitter svg { width: 4px; height: 4px; }
.canvas { flex: 1; min-width: 0; position: relative; background: #595959; }
.plan { width: 100%; font-family: Roboto, "Noto Sans", sans-serif; }
.badge { position: absolute; left: 1px; top: 3px; display: flex; align-items: center; gap: 3px; width: 95px; height: 12px; padding-left: 3px; border: 1px solid #858585; background: #555; color: #fff; font-weight: 700; white-space: nowrap; }
.badge i { width: 8px; height: 8px; border-radius: 50%; background: #0be60b; }
.dock { width: 11px; display: flex; flex-direction: column; background: #f6f6f6; }
.dock button { writing-mode: vertical-rl; width: 11px; padding: 1px 0; height: 32px; border-bottom: 1px solid #d0d0d0; }
.dock .active { height: 28px; background: #fff; }
.status { display: flex; align-items: center; height: 14px; padding: 0 12px 0 4px; border: solid #057568; border-width: 0 1px 1px; background: #f1f1f1; }
.status a, .saved { display: flex; align-items: center; gap: 3px; color: inherit; text-decoration: none; }
.status a { margin-right: 7px; }
.status svg { width: 7px; height: 7px; }
.total { color: #259238; }
.gl { margin-left: auto; margin-right: 10px; color: #222; }
.plan path { fill: none; }
.furn rect, .walls rect { fill: none; }
.walls .pillar { fill: #000; }
.axis path { stroke: #a30d2b; stroke-width: .7; stroke-dasharray: 9 1 2 1; }
.thin { stroke: #777; stroke-width: .6; }
.furn { stroke: #4b545c; stroke-width: .7; }
.blue { stroke: #2c5f86; stroke-width: .7; fill: none; }
.walls { stroke: #b5b5b5; stroke-width: .8; }
.green { stroke: #17b596; stroke-width: .8; stroke-dasharray: 4 1; }
.x-doors { stroke: #334039; stroke-width: .6; }
.marks { fill: #d01218; }
.posts { stroke: #bbb; stroke-width: .8; fill: none; }
.posts circle, .posts path { stroke: #c9c22a; }
.bubbles circle { fill: #000; stroke: #b01a30; stroke-width: .9; }
.bubbles text { fill: #fff; font-size: 4px; font-weight: 700; text-anchor: middle; }
.bubbles .big { font-size: 5px; }
.sections path { stroke: #aaa; stroke-width: .7; }
.sections circle { fill: #b01620; }
.rooms text { fill: #eee; font-size: 3px; font-weight: 700; text-anchor: middle; }
.levels rect { fill: #c33; }
.levels text { fill: #fff; font-size: 3px; text-anchor: middle; }
.plan .cap { fill: #fff; font-size: 6px; font-weight: 700; }
.plan .large { font-size: 8px; }
.schedule path { stroke: #777; stroke-width: .6; }
.schedule text { fill: #fff; font-size: 3px; font-weight: 700; text-anchor: middle; }
.schedule .left { text-anchor: start; }
</style>
